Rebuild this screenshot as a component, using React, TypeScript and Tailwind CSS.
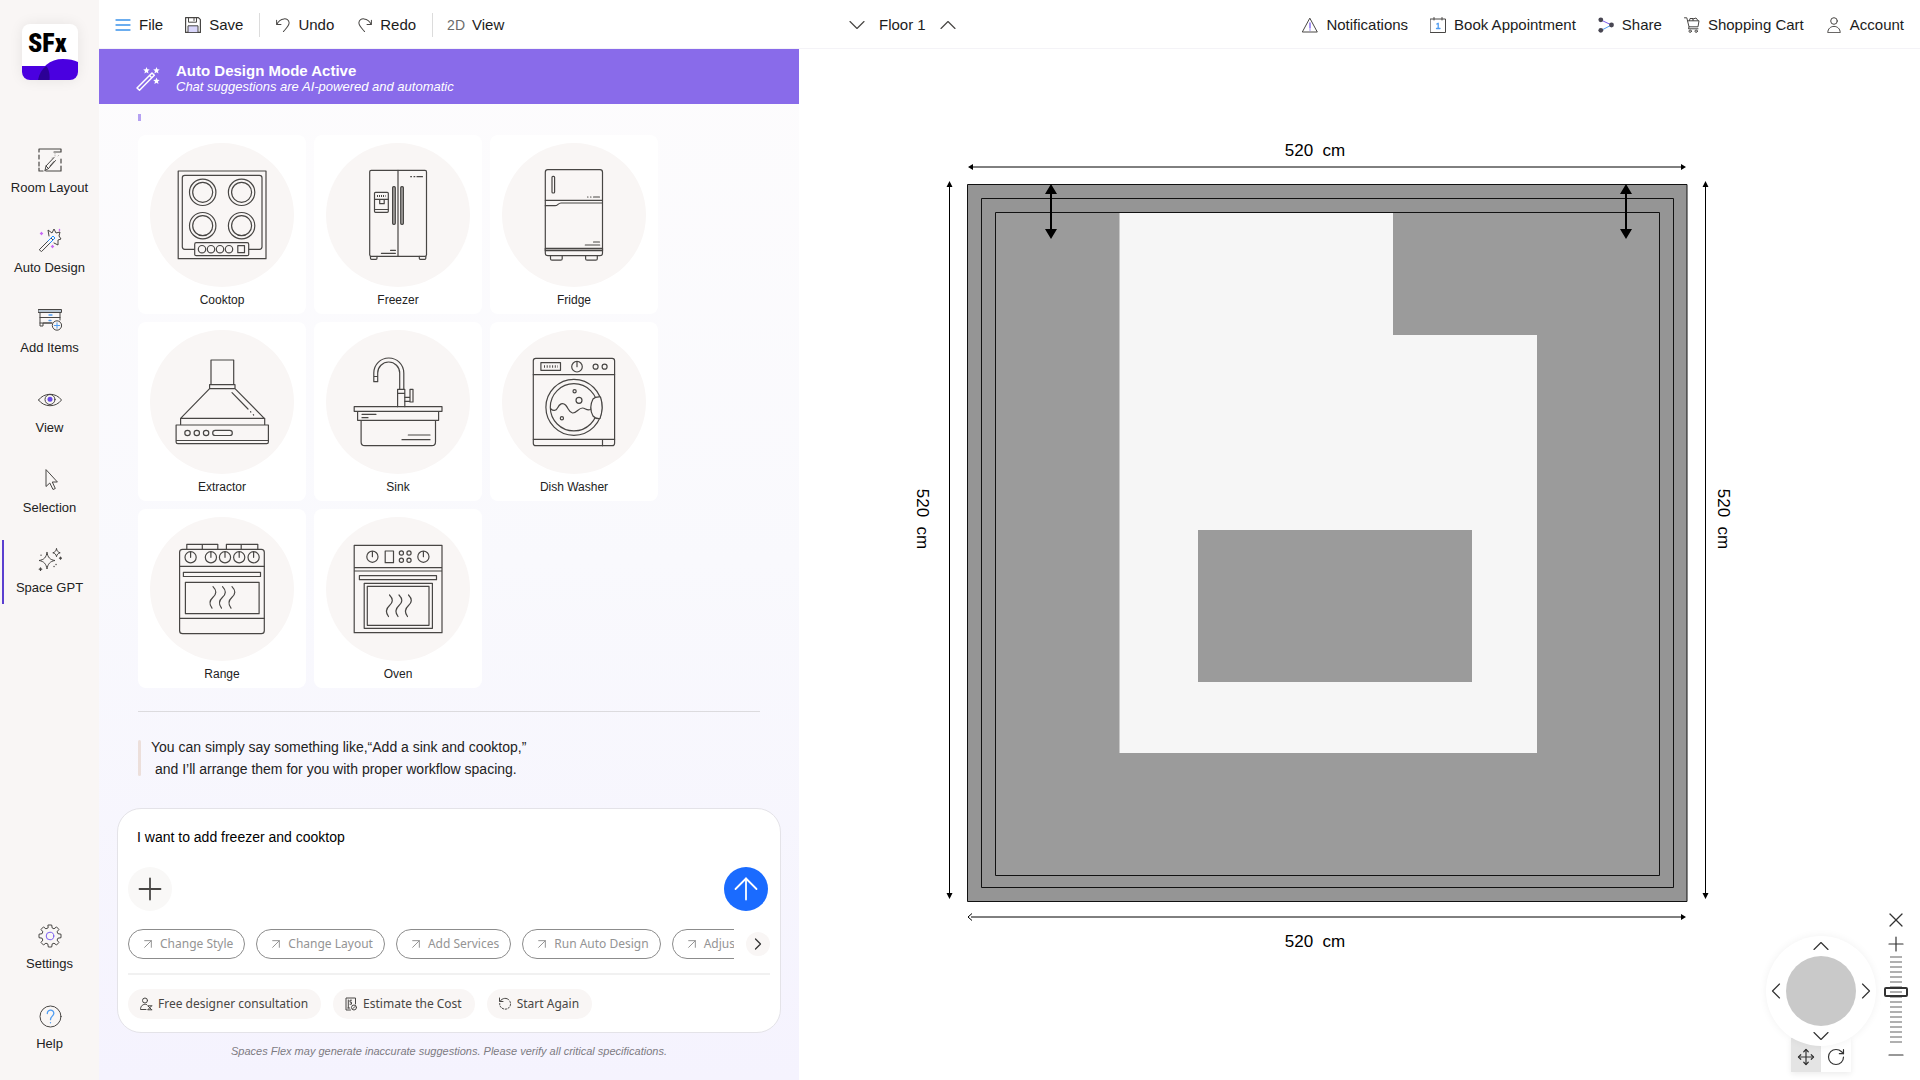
import React from 'react';
import { ArrowUp, ArrowUpRight, ChevronDown, ChevronLeft, ChevronRight, ChevronUp, Minus, Move, Plus, RotateCw, X } from 'lucide-react';

type IconProps = { children: React.ReactNode; size?: string; box?: string };

const Icon: React.FC<IconProps> = ({ children, size = 'w-6 h-6', box = '0 0 24 24' }) => (
  <svg
    className={`${size} shrink-0`}
    viewBox={box}
    fill="none"
    stroke="#484644"
    strokeWidth="1"
    strokeLinecap="round"
    strokeLinejoin="round"
    aria-hidden="true"
  >
    {children}
  </svg>
);

const Logo: React.FC = () => (
  <svg className="w-14 h-14 rounded-lg bg-white shadow-[0_0_14px_rgba(0,0,0,0.08)]" viewBox="0 0 56 56" role="img" aria-label="SFx">
    <text x="6" y="28" fontFamily="'Roboto Condensed', 'Open Sans Condensed', Roboto, sans-serif" fontWeight="900" fontSize="26">SFx</text>
    <path d="M0 42h24c3 3 4 8 3.500 14H0z" fill="#4a00e0" />
    <path d="M16 56c2-13 12-21 25-21 6 0 11 1 15 3v18z" fill="#4a00e0" />
    <path d="M24 42c3 3 4 8 3.500 14H16c1-6 4-10.500 8-14z" fill="#2c0096" />
  </svg>
);

const navItems = [
  {
    label: 'Room Layout',
    icon: (
      <Icon>
        <path d="M1 4V1h22v3h-7M1 7v4M1 14v4M1 20v3h4M8 23h15v-5M23 15v-4" strokeWidth="1.200" />
        <path d="M17 5v3M15 10h-2M20 8l1-1" stroke="#b9b6b4" strokeDasharray="1 1.500" />
        <path d="M7 22.500l1-4.500 8-8.500M10.500 20.500l7-8M7 22.500l3.500-2M8 18l2.500 2.500M12 18l4-4.500" />
      </Icon>
    ),
  },
  {
    label: 'Auto Design',
    icon: (
      <Icon>
        <path d="M1.500 21.500L13 10l2 2L3.800 23.300z" />
        <path d="M10 13l5-5 2 2-5 5" stroke="#1f8fff" />
        <path d="M11 8l-1-6 4 3 2-4 2 4 4-1-1 4 2 3-3 1v5l-4-2" />
        <path d="M3.500 4.500v2M2.500 5.500h2M14.500 17.500v2M13.500 18.500h2M21.500 1.500v1" stroke="#c86bf5" strokeWidth="1.400" />
      </Icon>
    ),
  },
  {
    label: 'Add Items',
    icon: (
      <Icon>
        <path d="M.5 1.500h23v3H.5z" fill="#b9c6d2" />
        <path d="M2 4.500V18h3v-3h9M22 4.500V12M2 9.500h20M2 15h12" />
        <path d="M11 7h3M11 12.500h2" stroke="#4f9df2" strokeWidth="1.300" />
        <circle cx="19" cy="17.500" r="4.700" fill="#f9f6f5" />
        <path d="M19 14.800v5.400M16.300 17.500h5.400" stroke="#4f9df2" />
      </Icon>
    ),
  },
  {
    label: 'View',
    icon: (
      <Icon>
        <path d="M.5 12C6 4.300 18 4.300 23.500 12 18 19.700 6 19.700.5 12z" />
        <circle cx="12" cy="11.500" r="5" />
        <circle cx="12" cy="11.300" r="2.500" fill="#6a4be6" stroke="none" />
      </Icon>
    ),
  },
  {
    label: 'Selection',
    icon: (
      <Icon>
        <path d="M8 2v16.500l3.800-3.500 3.200 6.500 2.300-1-3-6.500H19z" />
      </Icon>
    ),
  },
  {
    label: 'Space GPT',
    icon: (
      <Icon>
        <path d="M9 4.500c.8 5 3 7.300 8 8-5 .8-7.200 3.500-8 8.500-.8-5-3-7.700-8-8.500 5-.7 7.200-3 8-8z" />
        <path d="M18.500.8c.5 2.400 1.500 3.300 3.700 4-2.200.5-3.200 1.500-3.700 3.900-.5-2.400-1.500-3.400-3.700-3.900 2.200-.7 3.200-1.600 3.700-4z" />
        <path d="M2.500 20v2.400M1.300 21.200h2.400M22.500 9.200v2M21.500 10.200h2M16 18.500h.1M18 16.500h.1M3 7.200h.1" strokeWidth="1.300" />
      </Icon>
    ),
  },
];

const footerItems = [
  {
    label: 'Settings',
    icon: (
      <Icon>
        <path d="M10.300 1h3.400l.5 3 1.800.8 2.500-1.900 2.400 2.500-1.800 2.400.8 1.900 3.100.5v3.500l-3.100.5-.8 1.900 1.800 2.400-2.400 2.500-2.500-1.800-1.800.7-.5 3.100h-3.400l-.5-3.100-1.900-.7-2.400 1.800-2.500-2.500 1.800-2.400-.7-1.900-3.100-.5v-3.500l3.100-.5.7-1.900L3 5.400l2.500-2.500 2.400 1.900L9.800 4z" />
        <circle cx="12" cy="12" r="3.800" stroke="#7a5cf0" />
      </Icon>
    ),
  },
  {
    label: 'Help',
    icon: (
      <Icon>
        <circle cx="12.500" cy="12.500" r="10.500" />
        <path d="M9.300 9.500c0-4.500 6.700-4.300 6.500 0-.1 2.500-3.300 3-3.300 6.200M12.500 18.600v.2" stroke="#4f9df2" strokeWidth="1.300" />
      </Icon>
    ),
  },
];

const NavButton: React.FC<{ label: string; icon: React.ReactNode; active?: boolean }> = ({ label, icon, active }) => (
  <button
    className={`flex h-16 w-full flex-col items-center gap-2 border-x-2 border-r-transparent pt-2 text-[13px] leading-4 text-[#222] ${
      active ? 'border-l-[#5b3fd0]' : 'border-l-transparent'
    }`}
  >
    {icon}
    <span className="whitespace-nowrap">{label}</span>
  </button>
);

const rightActions = [
  {
    label: 'Notifications',
    icon: (
      <Icon size="w-4 h-4" box="0 0 16 16">
        <path d="M8 1.500L15.300 15H.7z" />
        <path d="M8 6v5M8 13v.1" stroke="#7a5cf0" strokeWidth="1.300" />
      </Icon>
    ),
  },
  {
    label: 'Book Appointment',
    icon: (
      <Icon size="w-4 h-4" box="0 0 16 16">
        <path d="M.5 2h15v13.500H.5zM4 .5V3M12 .5V3" />
        <path d="M6.800 7l1.400-.8v5.300M6.500 11.500H10" stroke="#4f9df2" strokeWidth="1.300" />
      </Icon>
    ),
  },
  {
    label: 'Share',
    icon: (
      <Icon size="w-4 h-4" box="0 0 16 16">
        <path d="M3 3l10.500 5" stroke="#7a5cf0" />
        <path d="M3 13.500L13.500 8" stroke="#4f9df2" />
        <circle cx="2.800" cy="2.800" r="2.400" fill="#484652" stroke="none" />
        <circle cx="13.500" cy="8" r="2.400" fill="#484652" stroke="none" />
        <circle cx="2.800" cy="13.300" r="2.400" fill="#484652" stroke="none" />
      </Icon>
    ),
  },
  {
    label: 'Shopping Cart',
    icon: (
      <Icon size="w-4 h-4" box="0 0 16 16">
        <path d="M.5.8h2.300l2.200 9h9l1-6H3.700M5 9.800l-.5 2h9.500" />
        <path d="M5.500 3.500l.5-2h3v2M9 2l3-1 2 2.500" />
        <circle cx="6.200" cy="14.200" r="1.200" />
        <circle cx="12.200" cy="14.200" r="1.200" />
      </Icon>
    ),
  },
  {
    label: 'Account',
    icon: (
      <Icon size="w-4 h-4" box="0 0 16 16">
        <circle cx="8" cy="4" r="3.300" />
        <path d="M1.800 15.300c0-8 12.400-8 12.400 0z" />
      </Icon>
    ),
  },
];

const Header: React.FC = () => (
  <header className="flex h-[46px] items-center border-b border-[#f4f3f7] box-content bg-white pt-[2px] pr-4 text-[15px] text-[#1c1c1c]">
    <div className="flex w-[700px] shrink-0 items-center pl-4">
      <button className="flex items-center gap-2">
        <Icon size="w-4 h-4" box="0 0 16 16">
          <path d="M1 3h14M1 8h14M1 13h14" stroke="#3b92ea" strokeWidth="1.300" />
        </Icon>
        File
      </button>
      <button className="ml-[22px] flex items-center gap-2">
        <Icon size="w-4 h-4" box="0 0 16 16">
          <path d="M.6.6h12.800l2 2v12.800H.6z" strokeWidth="1.200" />
          <path d="M3.500.6v4.600h8V.6M9 1.500v2" />
          <path d="M3 15.400V8.800h10v6.600z" fill="#d9d6fb" />
        </Icon>
        Save
      </button>
      <span className="ml-4 h-6 w-px bg-[#dcdcdc]" />
      <button className="ml-4 flex items-center gap-2">
        <Icon size="w-3.5 h-3.5" box="0 0 16 16">
          <path d="M.7 2.500v5h5M1 7.200C4.500-.5 14.500-1 15 5.500c0 3.500-3 6-6.500 10" strokeWidth="1.150" />
        </Icon>
        Undo
      </button>
      <button className="ml-6 flex items-center gap-2">
        <Icon size="w-3.5 h-3.5" box="0 0 16 16">
          <path d="M15.300 2.500v5h-5M15 7.200C11.500-.5 1.500-1 1 5.500c0 3.500 3 6 6.500 10" strokeWidth="1.150" />
        </Icon>
        Redo
      </button>
      <span className="ml-4 h-6 w-px bg-[#dcdcdc]" />
      <button className="ml-[14px] flex items-center gap-[7px]">
        <span className="text-sm text-[#6b6b6b]">2D</span>
        View
      </button>
    </div>
    <div className="flex items-center gap-2 pl-11">
      <button aria-label="Floor down"><ChevronDown className="h-7 w-7 text-[#484644]" strokeWidth={1} /></button>
      <span className="whitespace-nowrap">Floor 1</span>
      <button aria-label="Floor up"><ChevronUp className="h-7 w-7 text-[#484644]" strokeWidth={1} /></button>
    </div>
    <nav className="ml-auto flex items-center gap-[22px]">
      {rightActions.map(({ label, icon }) => (
        <button key={label} className="flex items-center gap-2 whitespace-nowrap">
          {icon}
          {label}
        </button>
      ))}
    </nav>
  </header>
);

const Steam: React.FC<{ x: number; y: number }> = ({ x, y }) => (
  <path d={`M${x} ${y}c4 4 3.500 7.500 0 10.500-3.500 3.200-4 7-1 11`} />
);

const Dial: React.FC<{ x: number; y: number; r?: number }> = ({ x, y, r = 5.6 }) => (
  <>
    <circle cx={x} cy={y} r={r} />
    <path d={`M${x} ${y}v${-r + 0.5}`} />
  </>
);

const appliances = [
  {
    label: 'Cooktop',
    drawing: (
      <>
        <path d="M28.200 28H116v87.700H28.200z" />
        <rect x="32.300" y="32.300" width="79.700" height="74" rx="2.500" />
        {[52.7, 91.6].map((cx) =>
          [49.3, 82.7].map((cy) => (
            <g key={`${cx}-${cy}`}>
              <circle cx={cx} cy={cy} r="13.200" />
              <circle cx={cx} cy={cy} r="10" />
            </g>
          ))
        )}
        <rect x="44.700" y="99.700" width="54" height="13" rx="1.500" fill="#f9f6f5" />
        {[52, 61, 70, 79].map((cx) => (
          <circle key={cx} cx={cx} cy="106.200" r="3.700" />
        ))}
        <path d="M87.800 102.700h6.700v7h-6.700z" />
      </>
    ),
  },
  {
    label: 'Freezer',
    drawing: (
      <>
        <rect x="43.700" y="27.300" width="56.800" height="86" rx="1.500" />
        <path d="M72 27.300v86M44.500 113.300v2q0 1 1 1H50q1 0 1-1v-2M93.300 113.300v2q0 1 1 1h4.500q1 0 1-1v-2" />
        <rect x="66.600" y="43.700" width="2.700" height="37.600" rx="1" fill="#a8a5a3" />
        <rect x="74.700" y="43.700" width="2.700" height="37.600" rx="1" fill="#a8a5a3" />
        <rect x="48.500" y="49.300" width="13.800" height="20" rx="1" />
        <path d="M48.500 56.300h13.800M48.500 66.500h13.800M53.700 56.300v4.400h4.500v-4.400M84.700 33.700h.8M88 33.700h.8M91 33.700h5.500M64.500 107.300h5M55.400 110.300h14" />
        <path d="M51 53h8.500" strokeDasharray="1 1" strokeWidth="2" strokeLinecap="butt" />
      </>
    ),
  },
  {
    label: 'Fridge',
    drawing: (
      <>
        <rect x="43.300" y="26.700" width="57.200" height="86" rx="2.500" />
        <rect x="50" y="33.300" width="2.600" height="16.700" rx="1" />
        <path d="M43.300 57.300h57.200M43.300 62.700H53c3 0 3-2.700 6-2.700h41.500M85.500 54h.5M88.500 54h.5M91.500 54h6M91.500 99h6M83.300 102h14.400" />
        <path d="M43.300 105.300h57.200v2.400H43.300z" fill="#a8a5a3" />
        <path d="M48.500 112.700v3q0 1.500 1.500 1.500h8.700q1.500 0 1.500-1.500v-3M83.600 112.700v3q0 1.500 1.500 1.500h8.700q1.500 0 1.500-1.500v-3" />
      </>
    ),
  },
  {
    label: 'Extractor',
    drawing: (
      <>
        <path d="M61 54.700V30h22.700v24.700M59.600 54.700H85v4H59.600zM59.600 58.700L30.600 88.300h83.700L85 58.700M30.600 88.300V95M114.700 88.300V95M26.100 95h92.300v17q0 1.700-1.700 1.700H27.800q-1.700 0-1.700-1.700zM26.100 110.500h92.300" />
        <path d="M82 62.700L98 79M100.500 81.700l.3.300M103.300 84.700l.3.300" />
        {[37.5, 46.8, 56.1].map((cx) => (
          <circle key={cx} cx={cx} cy="103" r="2.700" />
        ))}
        <rect x="62.700" y="100.300" width="19.600" height="5.200" rx="2.600" />
      </>
    ),
  },
  {
    label: 'Sink',
    drawing: (
      <>
        <path d="M28.200 76.700H116v4.600H28.200zM31.600 81.300v9h81v-9M35.100 90.300V112q0 3.700 3.700 3.700h67q3.700 0 3.700-3.700V90.300" />
        <path d="M36 84.300h14M36 87.700h6M82.300 105H104M76 109.700h28" />
        <path d="M71.600 76.700V59.300h7.200v17.400M71.600 63.300h7.200M77.800 59.300V43a15 15 0 0 0-30 0v8.700h3.900V43a11 11 0 0 1 22 0v16.300M47.800 46.500h3.900" />
        <path d="M78.800 67.300H84M78.800 71.300H84M84 59.300h3V72h-3z" />
      </>
    ),
  },
  {
    label: 'Dish Washer',
    drawing: (
      <>
        <rect x="31.300" y="28.300" width="81.300" height="87.400" rx="2.500" />
        <path d="M31.300 44.700h81.300M31.300 109.300h81.300M100.500 109.300v6.400M38.900 32.700h19.600v7.600H38.900z" />
        <path d="M42 36.500h14" strokeDasharray="1 1.700" strokeWidth="2.600" strokeLinecap="butt" />
        <Dial x={75} y={36.7} r={5.3} />
        <circle cx="93.600" cy="36.700" r="2.500" />
        <circle cx="102.600" cy="36.700" r="2.500" />
        <circle cx="71.900" cy="77.300" r="28" />
        <circle cx="71.900" cy="77.300" r="23.600" />
        <path d="M49 79c2 2 5 2 6.500-1 2-4 5-6 8-3 3 3 3 7 7 8 4 .5 6-5 10-5 3 0 4 3 8 1.500" />
        <circle cx="72.600" cy="61.300" r="1.600" />
        <circle cx="77" cy="70.300" r="3" />
        <circle cx="59.900" cy="88.300" r="1.600" />
        <path d="M98.500 67q-5-.5-7.500 2-4.500 8.500 0 17 2.500 3 7 2.500 4-11 .5-21.500z" fill="#f9f6f5" />
      </>
    ),
  },
  {
    label: 'Range',
    drawing: (
      <>
        <path d="M36.800 32.300v-5h31v5M52.300 27.300v5M76.400 32.300v-5h31.400v5M91.200 27.300v5M29.600 49.300h84.700M29.600 101.300h84.700" />
        <rect x="29.600" y="32.300" width="84.700" height="84.400" rx="3" />
        {[40.6, 60.9, 75, 89.2, 103.6].map((x) => (
          <Dial key={x} x={x} y={40.3} />
        ))}
        <path d="M33.400 55.300h77.100v4.200H33.400zM35.400 65.300h73.700v31.400H35.400z" />
        <Steam x={63} y={69.7} />
        <Steam x={72.500} y={69.7} />
        <Steam x={82} y={69.7} />
      </>
    ),
  },
  {
    label: 'Oven',
    drawing: (
      <>
        <path d="M28.200 28.300H116v87.400H28.200zM28.200 50.700H116M28.200 54H116M59.200 34h8.300v11.700h-8.300zM33.400 58.700h77.100v4H33.400zM38.200 66.300h68.200v45H38.200zM41.300 69.300H103v39H41.300z" />
        <Dial x={46.4} y={39.7} />
        <Dial x={97.4} y={39.7} />
        {[75.4, 83].map((cx) => [36, 43.3].map((cy) => <circle key={`${cx}-${cy}`} cx={cx} cy={cy} r="2.100" />))}
        <Steam x={63.500} y={78} />
        <Steam x={73} y={78} />
        <Steam x={82.500} y={78} />
      </>
    ),
  },
];

const suggestions = ['Change Style', 'Change Layout', 'Add Services', 'Run Auto Design', 'Adjust'];

const quickActions = [
  {
    label: 'Free designer consultation',
    icon: (
      <Icon size="w-3.5 h-3.5" box="0 0 14 14">
        <circle cx="6" cy="3.500" r="2.500" />
        <path d="M7.500 7.500C4 6.500 1.500 9 1.500 12.500H7M9 9l3.500 3.500M12.500 9L9 12.500M9 8.800h3.800M9 12.800h3.800" />
      </Icon>
    ),
  },
  {
    label: 'Estimate the Cost',
    icon: (
      <Icon size="w-3.5 h-3.5" box="0 0 14 14">
        <path d="M6.500 13H2V1h9.500v6M4.300 3v8M3.800 11h2M7.500 3.200H6v2h1.500v2H6" />
        <circle cx="10" cy="10.500" r="2.500" />
        <path d="M9 11.500l2-2" />
      </Icon>
    ),
  },
  {
    label: 'Start Again',
    icon: (
      <Icon size="w-3.5 h-3.5" box="0 0 14 14">
        <path d="M1.500 1v3.500H5" />
        <path d="M2 4.300C4.500.5 9 .6 11 3" />
        <path d="M12 4.500c2 4.500-2 8.500-6 7.500C3 11.300 1.500 9 1.700 6.500" strokeDasharray="1.500 1.500" />
      </Icon>
    ),
  },
];

const ChatPanel: React.FC = () => (
  <section className="flex w-[700px] shrink-0 flex-col bg-gradient-to-b from-[#fdfcfd] via-[#f9f9fd] to-[#f5f3fe]">
    <div className="flex h-[55px] items-center gap-4 bg-[#896bea] pt-1 pl-[37px] text-white">
      <svg className="h-6 w-6 shrink-0" viewBox="0 0 24 24" fill="none" stroke="#fff" strokeWidth="1.500" strokeLinejoin="round" aria-hidden="true">
        <path d="M1 21L16 6l2.300 2.300L3.500 23.200z" />
        <path d="M13.500 8.500l2.300 2.300" />
        <path
          d="M10.500 0l.9 2.300 2.300.2-1.800 1.600.6 2.400-2-1.300-2.100 1.300.6-2.400-1.800-1.600 2.400-.2zM20.500 0l.9 2.300 2.300.2-1.800 1.600.6 2.400-2-1.300-2.100 1.300.6-2.400-1.800-1.600 2.400-.2zM20.500 10.500l.9 2.300 2.300.2-1.800 1.600.6 2.400-2-1.300-2.100 1.300.6-2.400-1.800-1.600 2.400-.2z"
          fill="#fff"
          stroke="none"
        />
      </svg>
      <div>
        <h1 className="text-[15px] leading-4 font-bold">Auto Design Mode Active</h1>
        <p className="text-[13px] leading-4 italic">Chat suggestions are AI-powered and automatic</p>
      </div>
    </div>

    <div className="flex grow flex-col px-[39px] pt-[10px]">
      <span className="h-[7px] w-[3px] bg-[#b5a1f2]" />
      <div className="mt-[14px] flex flex-wrap gap-2 pr-20">
        {appliances.map(({ label, drawing }) => (
          <button key={label} className="flex h-[179px] w-[168px] flex-col items-center rounded-lg bg-white pt-2">
            <svg
              className="h-36 w-36 rounded-full bg-[#f9f6f5]"
              viewBox="0 0 144 144"
              fill="none"
              stroke="#484644"
              strokeWidth="1.200"
              strokeLinecap="round"
              strokeLinejoin="round"
              aria-hidden="true"
            >
              {drawing}
            </svg>
            <span className="mt-1 text-xs leading-[18px] text-[#222]">{label}</span>
          </button>
        ))}
      </div>
      <hr className="mt-[23px] border-[#dcdbde]" />
      <div className="mt-6 flex items-center gap-[10px] text-sm leading-[22px] text-[#222]">
        <span className="h-9 w-[3px] rounded-full bg-[#ecdfdb]" />
        <p className="whitespace-pre">{'You can simply say something like,“Add a sink and cooktop,”\n and I’ll arrange them for you with proper workflow spacing.'}</p>
      </div>
    </div>

    <div className="mx-[18px] mt-7 rounded-3xl border border-[#e4e3e8] bg-white px-[10px] pt-[10px] pb-[13px]">
      <textarea
        aria-label="Message"
        rows={1}
        defaultValue="I want to add freezer and cooktop"
        className="block h-9 w-full resize-none px-[9px] py-[7px] text-sm leading-[22px] text-black outline-none"
      />
      <div className="mt-3 flex justify-between pr-[2px]">
        <button aria-label="Add attachment" className="flex h-11 w-11 items-center justify-center rounded-full bg-[#f9f8f7] text-[#484644]">
          <Plus className="h-9 w-9" strokeWidth={1.2} />
        </button>
        <button aria-label="Send" className="flex h-11 w-11 items-center justify-center rounded-full bg-[#1a6bff] text-white">
          <ArrowUp className="h-9 w-9" strokeWidth={1.2} />
        </button>
      </div>
      <div className="mt-[18px] flex items-center gap-3">
        <div className="flex min-w-0 grow gap-[11px] overflow-hidden font-['Noto_Sans',sans-serif] text-xs text-[#949494]">
          {suggestions.map((label) => (
            <button key={label} className="flex h-[30px] shrink-0 items-center gap-1 rounded-full border border-[#8c8c8c] px-[11px] whitespace-nowrap">
              <ArrowUpRight className="h-4 w-4" strokeWidth={1.5} />
              {label}
            </button>
          ))}
        </div>
        <button aria-label="More suggestions" className="flex h-6 w-6 shrink-0 items-center justify-center rounded-full bg-[#f9f6f5] text-[#333]">
          <ChevronRight className="h-5 w-5" strokeWidth={1.5} />
        </button>
      </div>
      <hr className="mt-[14px] border-t-2 border-[#f1f1f1]" />
      <div className="mt-[14px] flex gap-3 font-['Noto_Sans',sans-serif] text-xs text-[#484644]">
        {quickActions.map(({ label, icon }) => (
          <button key={label} className="flex h-[30px] items-center gap-[5px] rounded-full bg-[#f9f6f5] pr-[13px] pl-[11px]">
            {icon}
            {label}
          </button>
        ))}
      </div>
    </div>
    <p className="mt-[9px] pb-5 text-center text-[11px] leading-[18px] text-[#7d7b82] italic">
      Spaces Flex may generate inaccurate suggestions. Please verify all critical specifications.
    </p>
  </section>
);

const FloorPlan: React.FC = () => (
  <svg
    className="h-full w-full"
    viewBox="799 49 1121 1031"
    fontSize="17"
    fontFamily="'Liberation Sans', sans-serif"
    textAnchor="middle"
    role="img"
    aria-label="Floor plan, 520 cm by 520 cm"
  >
    {/* Walls */}
    <g stroke="#111" strokeWidth="1">
      <path d="M967.500 184.500h719.500v717h-719.500z" fill="#959595" />
      <path d="M981.500 198.500h692v689h-692z" fill="#959595" />
      <path d="M995.500 212.500h664v663h-664z" fill="#9b9b9b" />
    </g>
    <path d="M1119.500 213H1393v122h144v418h-417.500z" fill="#f6f6f6" />
    <path d="M1198 530h274v152h-274z" fill="#9b9b9b" />

    {/* Dimension lines */}
    <g stroke="#000" strokeWidth="1">
      <path d="M971 167h713M949.500 185v711M1705.500 185v711M971 917h713" />
      <path d="M1051 190v43M1626 190v43" strokeWidth="2" />
    </g>
    <path d="M968 167l5-3v6zM1686 167l-5-3v6zM949.500 181l3 6h-6zM1705.500 181l3 6h-6zM949.500 899l3-6h-6zM1705.500 899l3-6h-6zM1686 917l-5-3v6z" />
    <path d="M972 913.500l-4 3.500 4 3.500" fill="none" stroke="#000" />
    <path d="M1051 184l6 10h-12zM1051 239l6-10h-12zM1626 184l6 10h-12zM1626 239l6-10h-12z" />

    <text x="1315" y="156" xmlSpace="preserve">520  cm</text>
    <text x="1315" y="947" xmlSpace="preserve">520  cm</text>
    <text transform="translate(917 519) rotate(90)" xmlSpace="preserve">520  cm</text>
    <text transform="translate(1718 519) rotate(90)" xmlSpace="preserve">520  cm</text>
  </svg>
);

const ViewControls: React.FC = () => (
  <div className="absolute right-3 bottom-2 flex items-end gap-2 text-[#333]">
    <div className="flex flex-col items-center">
      <div className="z-10 grid h-[110px] w-[110px] grid-cols-[20px_70px_20px] grid-rows-[20px_70px_20px] place-items-center rounded-full bg-white shadow-[0_0_8px_rgba(0,0,0,0.06)]">
        <button aria-label="Pan up" className="col-start-2 row-start-1"><ChevronUp className="h-7 w-7" strokeWidth={1} /></button>
        <button aria-label="Pan left" className="col-start-1 row-start-2"><ChevronLeft className="h-7 w-7" strokeWidth={1} /></button>
        <span className="col-start-2 row-start-2 h-[70px] w-[70px] rounded-full bg-[#c9c9c9]" />
        <button aria-label="Pan right" className="col-start-3 row-start-2"><ChevronRight className="h-7 w-7" strokeWidth={1} /></button>
        <button aria-label="Pan down" className="col-start-2 row-start-3"><ChevronDown className="h-7 w-7" strokeWidth={1} /></button>
      </div>
      <div className="-mt-2 flex shadow-[0_2px_6px_rgba(0,0,0,0.08)]">
        <button aria-label="Move" className="flex h-[34px] w-[30px] items-center justify-center bg-[#e4e4e4] pt-1">
          <Move className="h-[18px] w-[18px]" strokeWidth={1.6} />
        </button>
        <button aria-label="Rotate" className="flex h-[34px] w-[30px] items-center justify-center bg-white pt-1">
          <RotateCw className="h-5 w-5" strokeWidth={1.4} />
        </button>
      </div>
    </div>
    <div className="mb-[5px] flex w-6 flex-col items-center">
      <button aria-label="Close"><X className="h-6 w-6" strokeWidth={1.2} /></button>
      <button aria-label="Zoom in"><Plus className="h-6 w-6" strokeWidth={1.2} /></button>
      <input
        type="range"
        aria-label="Zoom"
        min={0}
        max={100}
        defaultValue={60}
        className="h-[87px] w-6 appearance-none bg-[repeating-linear-gradient(to_bottom,#b0b0b0_0_2px,transparent_2px_5px)] bg-[length:12px_100%] bg-center bg-no-repeat [direction:rtl] [writing-mode:vertical-lr] [&::-webkit-slider-thumb]:h-[10px] [&::-webkit-slider-thumb]:w-6 [&::-webkit-slider-thumb]:appearance-none [&::-webkit-slider-thumb]:rounded-xs [&::-webkit-slider-thumb]:border-2 [&::-webkit-slider-thumb]:border-[#333]"
      />
      <button aria-label="Zoom out"><Minus className="h-6 w-6" strokeWidth={1.2} /></button>
    </div>
  </div>
);

const App: React.FC = () => {
  return (
    <div className="flex min-h-screen bg-white font-['Liberation_Sans',sans-serif]">
      <aside className="flex w-[99px] shrink-0 flex-col items-center bg-[#f9f6f5] px-[2px] pt-6 pb-5">
        <Logo />
        <nav className="mt-[60px] flex w-full flex-col gap-4">
          {navItems.map((item) => (
            <NavButton key={item.label} {...item} active={item.label === 'Space GPT'} />
          ))}
        </nav>
        <nav className="mt-auto flex w-full flex-col gap-4">
          {footerItems.map((item) => (
            <NavButton key={item.label} {...item} />
          ))}
        </nav>
      </aside>
      <div className="flex min-w-0 grow flex-col">
        <Header />
        <div className="flex grow">
          <ChatPanel />
          <main className="relative min-w-0 grow">
            <FloorPlan />
            <ViewControls />
          </main>
        </div>
      </div>
    </div>
  );
};

export default App;
